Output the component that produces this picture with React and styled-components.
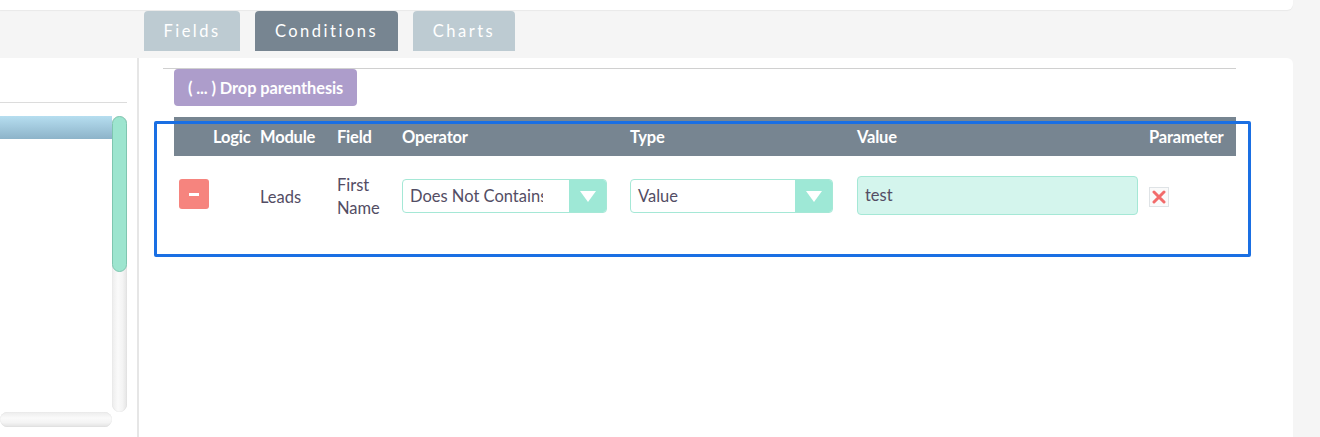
import React from "react";
import styled, { createGlobalStyle } from "styled-components";

const Global = createGlobalStyle`
  html, body { margin: 0; padding: 0; }
  body {
    background: #f5f5f5;
    font-family: Lato, "Open Sans", "Liberation Sans", sans-serif;
    color: #534d64;
    width: 1320px;
    height: 437px;
    overflow: hidden;
  }
  * { box-sizing: border-box; }
`;

const Page = styled.div`
  display: flex;
  flex-direction: column;
  width: 1320px;
  height: 437px;
`;

const TopStrip = styled.div`
  width: 1293px;
  height: 10px;
  background: #fff;
  border-bottom-right-radius: 6px;
  box-shadow: 0 1px 1px rgba(0, 0, 0, 0.05);
`;

const TabBar = styled.div`
  display: flex;
  gap: 15px;
  padding-left: 144px;
  margin-top: 1px;
  height: 40px;
`;

const Tab = styled.div`
  height: 40px;
  display: flex;
  align-items: center;
  justify-content: center;
  padding-bottom: 1px;
  border-radius: 4px 4px 0 0;
  background: ${(p) => (p.$active ? "#778591" : "#bdcbd2")};
  color: #fff;
  font-size: 16.5px;
  letter-spacing: 2.5px;
  width: ${(p) => p.$w}px;
`;

const Main = styled.div`
  margin-top: 7px;
  flex: 1;
  width: 1293px;
  background: #fff;
  border-top-right-radius: 6px;
  display: grid;
  grid-template-columns: 137px 2px 1fr;
`;

const LeftCol = styled.div`
  display: flex;
  flex-direction: column;
`;

const LeftRule = styled.div`
  margin-top: 44px;
  width: 127px;
  height: 1px;
  background: #dcdcdc;
`;

const TreeBox = styled.div`
  margin-top: 13px;
  display: grid;
  grid-template-columns: 112px 15px;
  grid-template-rows: 296px 15px;
`;

const TreeArea = styled.div`
  background: #fff;
`;

const TreeBar = styled.div`
  height: 23px;
  background: linear-gradient(#b6def0, #8db3c9);
`;

const VTrack = styled.div`
  border-radius: 8px;
  background: linear-gradient(90deg, #ececec, #fafafa 40%, #f4f4f4 70%, #e4e4e4);
  box-shadow: inset 0 0 1px rgba(0, 0, 0, 0.15);
  display: flex;
  flex-direction: column;
`;

const VThumb = styled.div`
  height: 156px;
  border-radius: 8px;
  background: #9de5cf;
  border: 1px solid #7fc6b0;
`;

const HTrack = styled.div`
  border-radius: 8px;
  background: linear-gradient(#ececec, #fafafa 40%, #f4f4f4 70%, #e2e2e2);
  box-shadow: inset 0 0 1px rgba(0, 0, 0, 0.15);
`;

const Divider = styled.div`
  background: #e6e6e6;
`;

const RightCol = styled.div`
  position: relative;
  padding: 10px 0 0 24px;
  display: flex;
  flex-direction: column;
`;

const TopRule = styled.div`
  width: 1073px;
  height: 1px;
  background: #d0d0d0;
`;

const Toolbar = styled.div`
  padding-left: 11px;
`;

const DropButton = styled.div`
  display: inline-flex;
  align-items: center;
  height: 37px;
  padding: 0 14px 0 14px;
  background: #ad9dcb;
  border-radius: 4px;
  color: #fff;
  font-weight: 700;
  font-size: 16.4px;
  letter-spacing: -0.1px;
`;

const Table = styled.div`
  margin: 11px 0 0 11px;
  width: 1062px;
  display: grid;
  grid-template-columns: 39px 47px 77px 65px 228px 227px 292px 87px;
`;

const HeadCell = styled.div`
  height: 39px;
  background: #778591;
  color: #fff;
  font-weight: 700;
  font-size: 16.5px;
  letter-spacing: -0.2px;
  display: flex;
  align-items: center;
  white-space: nowrap;
`;

const Cell = styled.div`
  height: 80px;
  display: flex;
  align-items: center;
  font-size: 16.5px;
  line-height: 23px;
  color: #534d64;
  padding-top: 2px;
  padding-left: ${(p) => p.$pl || 0}px;
`;

const MinusBtn = styled.div`
  width: 30px;
  height: 30px;
  margin-top: -6px;
  border-radius: 3px;
  background: #f6847e;
  display: flex;
  align-items: center;
  justify-content: center;
  &::after {
    content: "";
    width: 10px;
    height: 3px;
    background: #fff;
  }
`;

const Select = styled.div`
  width: ${(p) => p.$w}px;
  height: 34px;
  margin-top: -2px;
  display: flex;
  border: 1px solid #a5e8d6;
  border-radius: 4px;
  overflow: hidden;
  background: #fff;
`;

const SelectText = styled.div`
  flex: 1;
  padding-left: 7px;
  padding-top: 1px;
  display: flex;
  align-items: center;
  font-size: 16.5px;
  color: #534d64;
  white-space: nowrap;
  overflow: hidden;
  margin-right: ${(p) => p.$mr || 0}px;
`;

const Arrow = styled.div`
  width: 37px;
  background: #9ee8d6;
  display: flex;
  align-items: center;
  justify-content: center;
  &::after {
    content: "";
    border-left: 8px solid transparent;
    border-right: 8px solid transparent;
    border-top: 11px solid #fff;
  }
`;

const TextInput = styled.div`
  width: 281px;
  height: 39px;
  margin-top: -4px;
  background: #d4f5ed;
  border: 1px solid #a5e8d6;
  border-radius: 4px;
  padding-left: 7px;
  display: flex;
  align-items: center;
  font-size: 16.5px;
  color: #534d64;
`;

const DelIcon = styled.div`
  width: 20px;
  height: 20px;
  border: 1px solid #dfe3e6;
  background: #fafafa;
  display: flex;
  align-items: center;
  justify-content: center;
`;

const Selection = styled.div`
  position: absolute;
  left: 15px;
  top: 63px;
  width: 1097px;
  height: 136px;
  border: 3px solid #1a6fe3;
  border-radius: 2px;
  pointer-events: none;
`;

const headers = ["", "Logic", "Module", "Field", "Operator", "Type", "Value", "Parameter"];

export default function App() {
  return (
    <Page>
      <Global />
      <TopStrip />
      <TabBar>
        <Tab $w={96}>Fields</Tab>
        <Tab $w={143} $active>Conditions</Tab>
        <Tab $w={102}>Charts</Tab>
      </TabBar>
      <Main>
        <LeftCol>
          <LeftRule />
          <TreeBox>
            <TreeArea>
              <TreeBar />
            </TreeArea>
            <VTrack>
              <VThumb />
            </VTrack>
            <HTrack />
          </TreeBox>
        </LeftCol>
        <Divider />
        <RightCol>
          <TopRule />
          <Toolbar>
            <DropButton>( ... ) Drop parenthesis</DropButton>
          </Toolbar>
          <Table>
            {headers.map((h, i) => (
              <HeadCell key={i}>{h}</HeadCell>
            ))}
            <Cell $pl={5}>
              <MinusBtn />
            </Cell>
            <Cell />
            <Cell>Leads</Cell>
            <Cell>
              First
              <br />
              Name
            </Cell>
            <Cell>
              <Select $w={205}>
                <SelectText $mr={26}>Does Not Contains</SelectText>
                <Arrow />
              </Select>
            </Cell>
            <Cell>
              <Select $w={203}>
                <SelectText>Value</SelectText>
                <Arrow />
              </Select>
            </Cell>
            <Cell>
              <TextInput>test</TextInput>
            </Cell>
            <Cell>
              <DelIcon>
                <svg width="14" height="14" viewBox="0 0 14 14">
                  <path d="M2 2 L12 12 M12 2 L2 12" stroke="#f26b6b" strokeWidth="3" strokeLinecap="round" />
                </svg>
              </DelIcon>
            </Cell>
          </Table>
          <Selection />
        </RightCol>
      </Main>
    </Page>
  );
}
